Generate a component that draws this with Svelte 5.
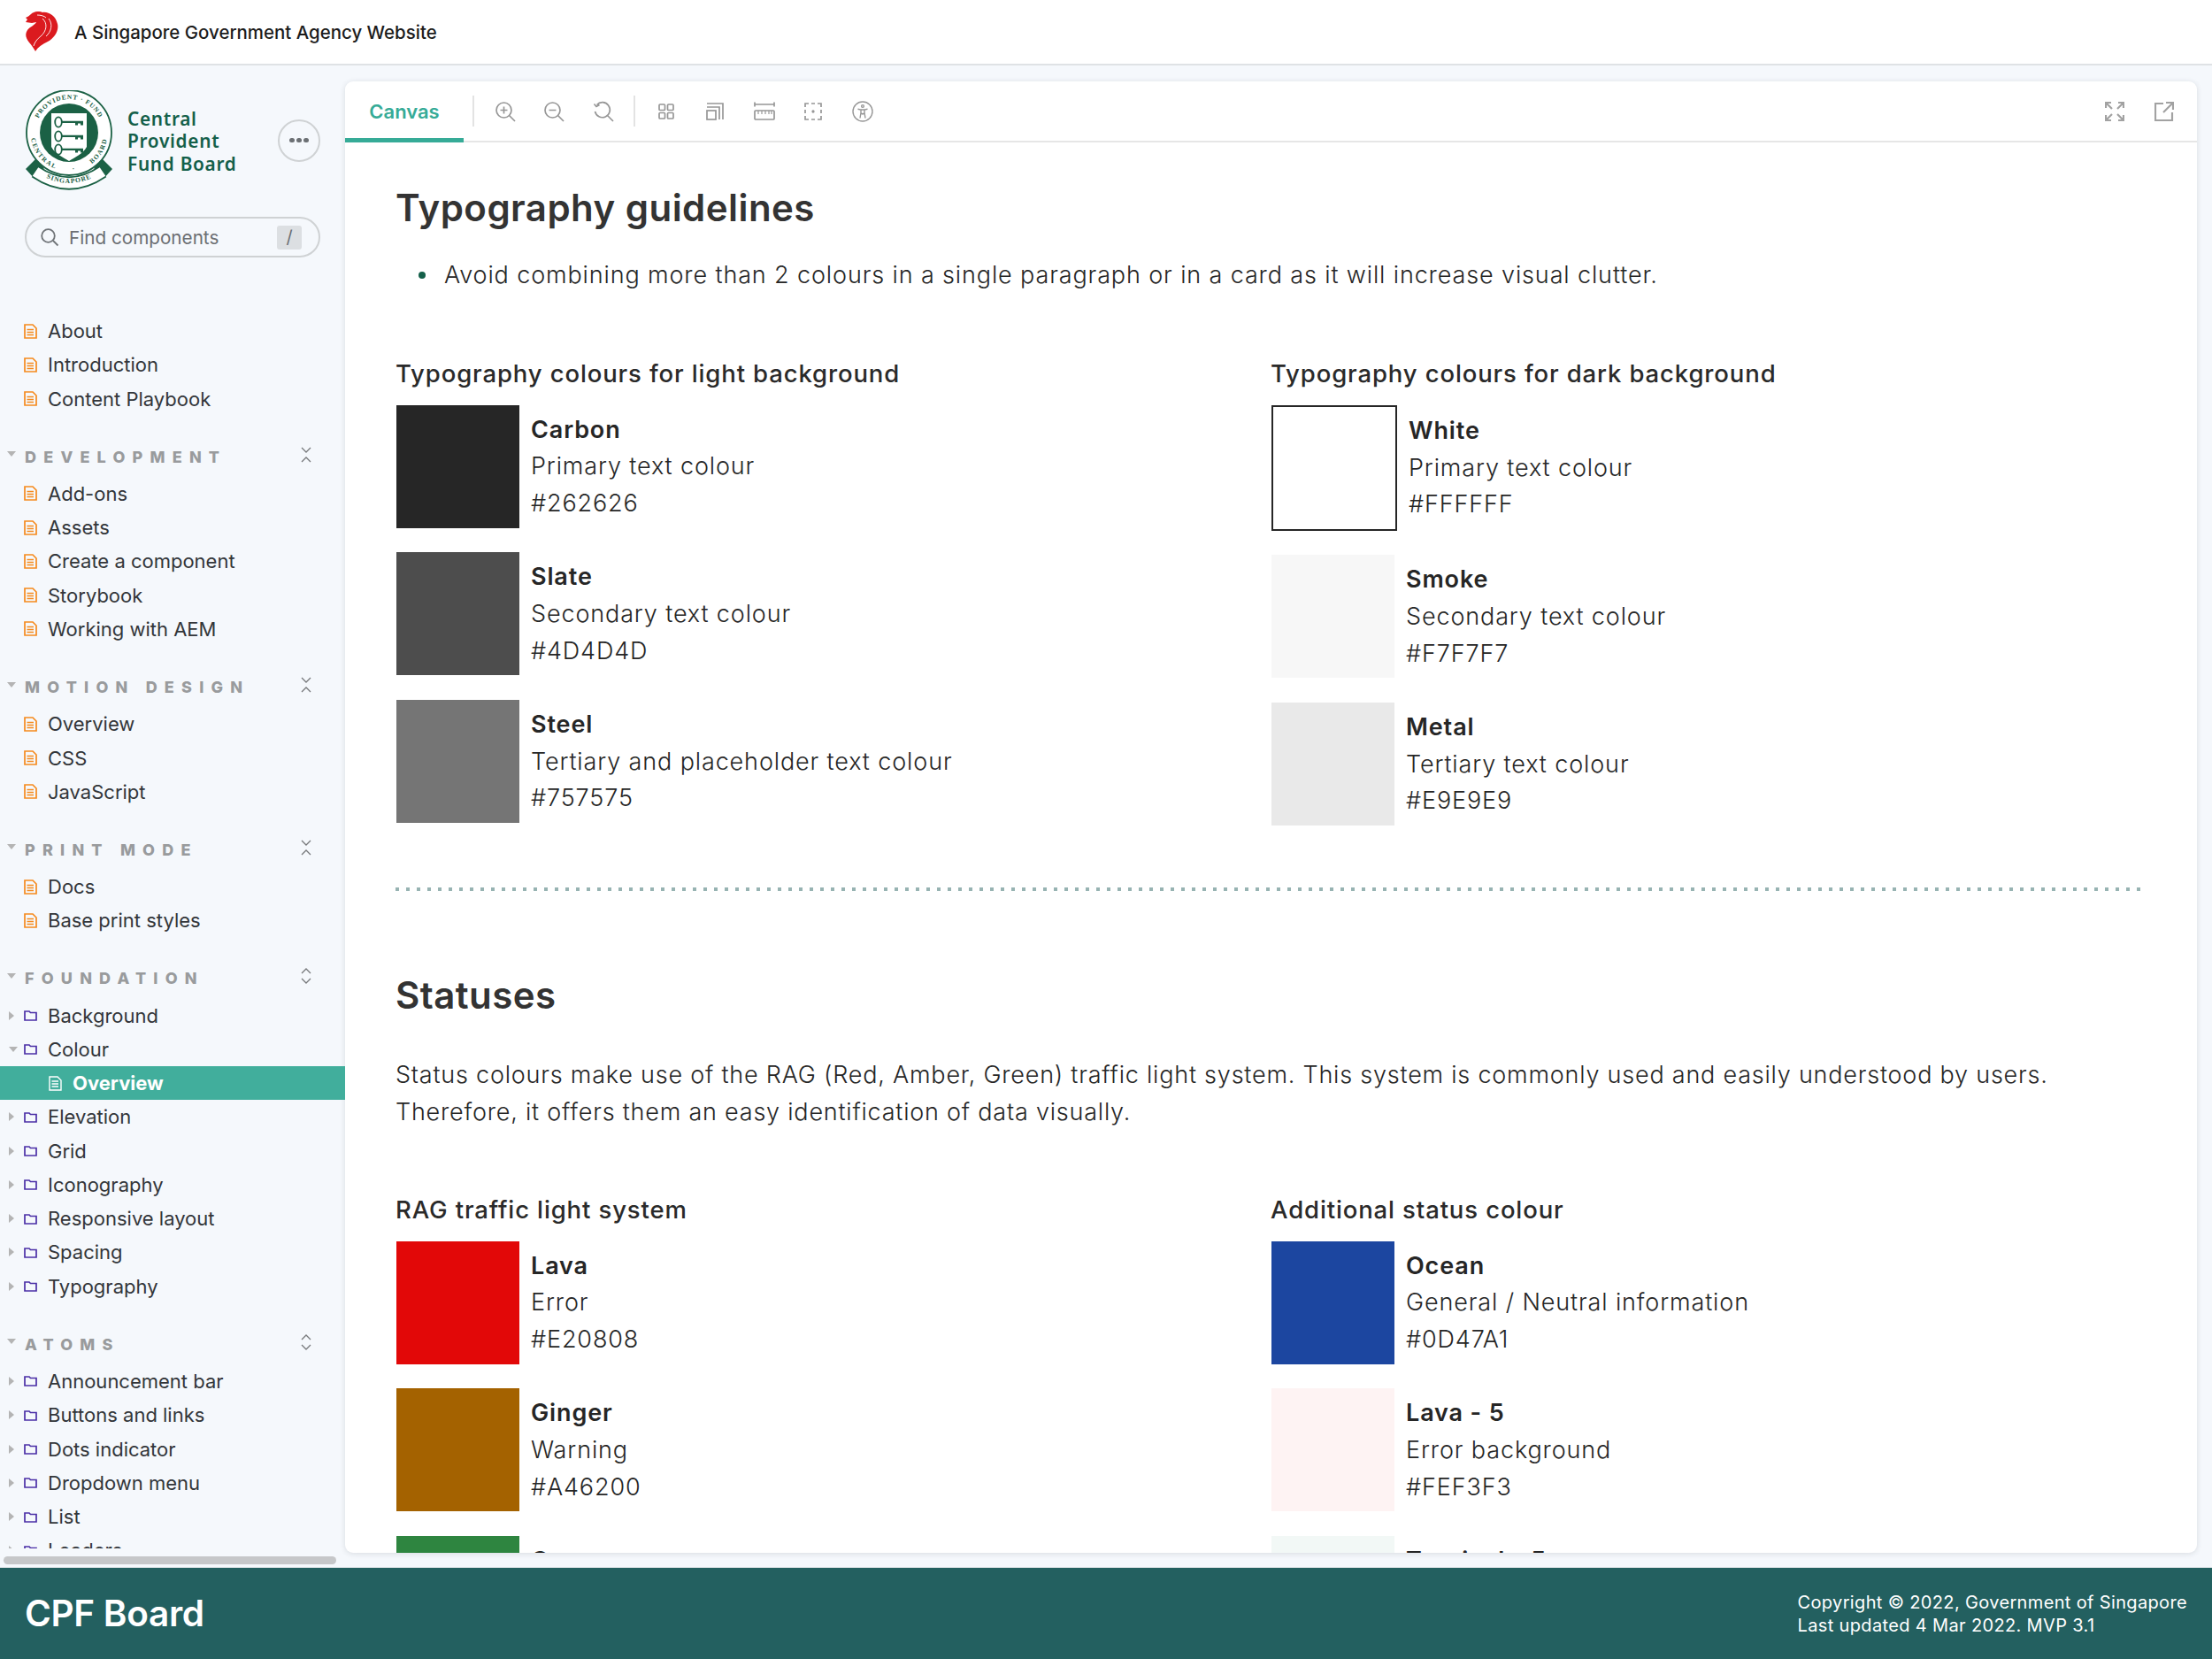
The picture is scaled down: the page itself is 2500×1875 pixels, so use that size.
<script>
  const groups = [
    { items: [['About'], ['Introduction'], ['Content Playbook']].map(a => ({ t: a[0], k: 'doc' })) },
    { label: 'DEVELOPMENT', mode: 'collapse', items: ['Add-ons', 'Assets', 'Create a component', 'Storybook', 'Working with AEM'].map(t => ({ t, k: 'doc' })) },
    { label: 'MOTION DESIGN', mode: 'collapse', items: ['Overview', 'CSS', 'JavaScript'].map(t => ({ t, k: 'doc' })) },
    { label: 'PRINT MODE', mode: 'collapse', items: ['Docs', 'Base print styles'].map(t => ({ t, k: 'doc' })) },
    { label: 'FOUNDATION', mode: 'expand', items: [
      { t: 'Background', k: 'folder' }, { t: 'Colour', k: 'folder', open: true }, { t: 'Overview', k: 'active' },
      { t: 'Elevation', k: 'folder' }, { t: 'Grid', k: 'folder' }, { t: 'Iconography', k: 'folder' },
      { t: 'Responsive layout', k: 'folder' }, { t: 'Spacing', k: 'folder' }, { t: 'Typography', k: 'folder' } ] },
    { label: 'ATOMS', mode: 'expand', items: ['Announcement bar', 'Buttons and links', 'Dots indicator', 'Dropdown menu', 'List', 'Loaders'].map(t => ({ t, k: 'folder' })) }
  ];
  const light = [
    { n: 'Carbon', d: 'Primary text colour', h: '#262626' },
    { n: 'Slate', d: 'Secondary text colour', h: '#4D4D4D' },
    { n: 'Steel', d: 'Tertiary and placeholder text colour', h: '#757575' }
  ];
  const dark = [
    { n: 'White', d: 'Primary text colour', h: '#FFFFFF', outlined: true },
    { n: 'Smoke', d: 'Secondary text colour', h: '#F7F7F7' },
    { n: 'Metal', d: 'Tertiary text colour', h: '#E9E9E9' }
  ];
  const rag = [
    { n: 'Lava', d: 'Error', h: '#E20808' },
    { n: 'Ginger', d: 'Warning', h: '#A46200' },
    { n: 'Green', d: 'Success', h: '#2E8540' }
  ];
  const extra = [
    { n: 'Ocean', d: 'General / Neutral information', h: '#0D47A1', c: '#1c46a0' },
    { n: 'Lava - 5', d: 'Error background', h: '#FEF3F3' },
    { n: 'Tropical - 5', d: 'Success background', h: '#F2F8F6' }
  ];
</script>

{#snippet swatches(list)}
  <div class="swatches">
    {#each list as s}
      <div class="swatch">
        <div class="chip" class:outlined={s.outlined} style="background:{s.c ?? s.h}"></div>
        <div class="info">
          <div class="name">{s.n}</div>
          <div>{s.d}</div>
          <div>{s.h}</div>
        </div>
      </div>
    {/each}
  </div>
{/snippet}

<div class="page">
  <header class="top">
    <svg class="lion" viewBox="0 0 38 45" width="38" height="45">
      <path fill="#db1a1f" d="M1 7C3 6 5 5 7 3C10 0 16-1 20 1C27 0 35 5 37 14C39 22 33 30 26 34C20 37 15 40 12 45C10 42 8 38 5 35C1 30 0 26 3 21C6 17 12 15 13 12L8 13L1 12L3 9Z"/>
      <path fill="none" stroke="#fff" stroke-width="0.9" d="M20 8C26 13 25 22 18 28C14 31 11 35 10 39M27 8C32 14 30 23 24 28M14 4C18 4 22 5 24 7"/>
    </svg>
    <span>A Singapore Government Agency Website</span>
  </header>

  <div class="middle">
    <aside class="side">
      <div class="brand">
        <svg class="crest" viewBox="0 0 100 113" width="100" height="113">
          <defs>
            <path id="ringTop" d="M12 48A38 38 0 0 1 88 48"/>
            <path id="ringBot" d="M6.5 48A43.5 43.5 0 0 0 93.5 48"/>
            <path id="ribbon" d="M12 92Q50 118 88 92"/>
          </defs>
          <circle cx="50" cy="48" r="48" fill="#fff" stroke="#1b6145" stroke-width="1.8"/>
          <circle cx="50" cy="48" r="33" fill="#1b6145"/>
          <text class="ct"><textPath href="#ringTop" startOffset="50%" text-anchor="middle">PROVIDENT · FUND</textPath></text>
          <text class="ct wide"><textPath href="#ringBot" startOffset="50%" text-anchor="middle">CENTRAL · BOARD</textPath></text>
          <path d="M30 26H70V64C66 72 56 76 50 80C44 76 34 72 30 64Z" fill="#fff"/>
          {#each [36, 52, 67] as y}
            <g transform="translate(0,{y - 36})">
              <ellipse cx="38" cy="36" rx="3.8" ry="5.6" fill="none" stroke="#1b6145" stroke-width="1.8"/>
              <path d="M41 34.8H66V39.5H63V37.5H60V39.5H57V37H41Z" fill="#1b6145"/>
            </g>
          {/each}
          <path d="M1 89L12 78L22 88L11 100Z" fill="#1b6145"/>
          <path d="M99 89L88 78L78 88L89 100Z" fill="#1b6145"/>
          <path d="M12 92Q50 118 88 92" fill="none" stroke="#1b6145" stroke-width="15"/>
          <path d="M12 92Q50 118 88 92" fill="none" stroke="#fff" stroke-width="11.5"/>
          <text class="ct rib"><textPath href="#ribbon" startOffset="50%" text-anchor="middle">SINGAPORE</textPath></text>
        </svg>
        <div class="brand-name">Central<br />Provident<br />Fund Board</div>
        <button class="more" aria-label="More"><i></i><i></i><i></i></button>
      </div>

      <div class="search">
        <svg viewBox="0 0 22 22" width="22" height="22" fill="none" stroke="#6f7377" stroke-width="1.8"><circle cx="9.5" cy="9.5" r="7.3"/><path d="M15 15l5.5 5.5"/></svg>
        <span>Find components</span>
        <kbd>/</kbd>
      </div>

      <nav class="nav">
        {#each groups as g}
          <section class="group">
            {#if g.label}
              <div class="label">
                <svg class="tri" viewBox="0 0 10 6" width="10" height="6"><path d="M0 0H10L5 6Z" fill="#b4b4b4"/></svg>
                <span>{g.label}</span>
                <svg class="toggle" viewBox="0 0 12 18" width="12" height="18" fill="none" stroke="#77797c" stroke-width="1.3">
                  {#if g.mode === 'collapse'}<path d="M1 1l5 5 5-5M1 17l5-5 5 5"/>{:else}<path d="M1 6l5-5 5 5M1 12l5 5 5-5"/>{/if}
                </svg>
              </div>
            {/if}
            {#each g.items as it}
              {#if it.k === 'active'}
                <div class="row active">
                  <svg viewBox="0 0 15 17" width="15" height="17" fill="none" stroke="#fff" stroke-width="1.4"><path d="M1 1H10L14 5V16H1ZM3.5 6H11M3.5 9H11M3.5 12H11"/></svg>
                  <span>{it.t}</span>
                </div>
              {:else}
                <div class="row">
                  <span class="twist">
                    {#if it.k === 'folder'}
                      {#if it.open}
                        <svg viewBox="0 0 10 6" width="10" height="6"><path d="M0 0H10L5 6Z" fill="#b4b4b4"/></svg>
                      {:else}
                        <svg viewBox="0 0 6 10" width="6" height="10"><path d="M0 0V10L6 5Z" fill="#b4b4b4"/></svg>
                      {/if}
                    {/if}
                  </span>
                  {#if it.k === 'doc'}
                    <svg viewBox="0 0 15 17" width="15" height="17" fill="none" stroke="#f58a1e" stroke-width="1.7"><path d="M1 1H10L14 5V16H1ZM3.5 6.5H11M3.5 9.5H11M3.5 12.5H11"/></svg>
                  {:else}
                    <svg viewBox="0 0 15 13" width="15" height="13" fill="none" stroke="#4b2fa6" stroke-width="1.7"><path d="M1 2H6L7.5 3.5H14V12H1Z"/></svg>
                  {/if}
                  <span>{it.t}</span>
                </div>
              {/if}
            {/each}
          </section>
        {/each}
      </nav>
      <div class="hscroll"><div class="thumb"></div></div>
    </aside>

    <main class="card">
      <div class="toolbar">
        <div class="tab">Canvas</div>
        <div class="tools" aria-hidden="true">
          <span class="sep"></span>
          <svg viewBox="0 0 24 24" class="ic"><circle cx="10.5" cy="10.5" r="8.5"/><path d="M16.5 16.5L23 23M10.5 6.5v8M6.5 10.5h8"/></svg>
          <svg viewBox="0 0 24 24" class="ic"><circle cx="10.5" cy="10.5" r="8.5"/><path d="M16.5 16.5L23 23M6.5 10.5h8"/></svg>
          <svg viewBox="0 0 24 24" class="ic"><path d="M4.5 4.5A8.5 8.5 0 1 1 2.5 12M1.5 3.5L4 6.5L7.5 4.5M16.5 16.5L23 23"/></svg>
          <span class="sep"></span>
          <svg viewBox="0 0 24 24" class="ic"><rect x="4" y="4" width="6.5" height="6.5" rx="1"/><rect x="13.5" y="4" width="6.5" height="6.5" rx="1"/><rect x="4" y="13.5" width="6.5" height="6.5" rx="1"/><rect x="13.5" y="13.5" width="6.5" height="6.5" rx="1"/></svg>
          <svg viewBox="0 0 24 24" class="ic"><rect x="3" y="11" width="10" height="10"/><path d="M3 7H17V21M3 3H21V21"/></svg>
          <svg viewBox="0 0 24 24" class="ic"><path d="M1 4H23M1 1.5V6.5M23 1.5V6.5"/><rect x="1" y="11" width="22" height="10" rx="1"/><path d="M5 11V15M9 11V15M13 11V15M17 11V15M20 11V15" stroke-width="1.2"/></svg>
          <svg viewBox="0 0 24 24" class="ic"><path d="M3 7V3H7M10 3H14M17 3H21V7M21 10V14M21 17V21H17M14 21H10M7 21H3V17M3 14V10"/><circle cx="12" cy="12" r="0.8"/></svg>
          <svg viewBox="0 0 24 24" class="ic thin"><circle cx="12" cy="12" r="11"/><circle cx="12" cy="6" r="1.4"/><path d="M6.5 9.2L10 10V13.5L9 19.5M17.5 9.2L14 10V13.5L15 19.5M10 10H14M10 14L12 15L14 14"/></svg>
        </div>
        <div class="tools right" aria-hidden="true">
          <svg viewBox="0 0 22 22" class="ic2"><path d="M1 7V1H7M1 1L8 8M15 1H21V7M21 1L14 8M1 15V21H7M1 21L8 14M21 15V21H15M21 21L14 14"/></svg>
          <svg viewBox="0 0 22 22" class="ic2"><path d="M10 2H1V21H20V12M13 1H21V9M21 1L10 12"/></svg>
        </div>
      </div>

      <div class="content">
        <h1>Typography guidelines</h1>
        <ul><li>Avoid combining more than 2 colours in a single paragraph or in a card as it will increase visual clutter.</li></ul>

        <div class="cols">
          <div>
            <h3>Typography colours for light background</h3>
            {@render swatches(light)}
          </div>
          <div>
            <h3>Typography colours for dark background</h3>
            {@render swatches(dark)}
          </div>
        </div>

        <hr />

        <h2>Statuses</h2>
        <p>Status colours make use of the RAG (Red, Amber, Green) traffic light system. This system is commonly used and easily understood by users. Therefore, it offers them an easy identification of data visually.</p>

        <div class="cols second">
          <div>
            <h3>RAG traffic light system</h3>
            {@render swatches(rag)}
          </div>
          <div>
            <h3>Additional status colour</h3>
            {@render swatches(extra)}
          </div>
        </div>
      </div>
    </main>
  </div>

  <footer class="foot">
    <div class="foot-name">CPF Board</div>
    <div class="foot-copy">Copyright © 2022, Government of Singapore<br />Last updated 4 Mar 2022. MVP 3.1</div>
  </footer>
</div>

<style>
  :global(body) { margin: 0; background: #f5f8fc; }
  .page {
    width: 2500px; height: 1875px; display: grid; grid-template-rows: 74px 1fr 104px;
    font-family: Inter, "Liberation Sans", sans-serif; color: #262626; overflow: hidden;
  }
  .top {
    display: flex; align-items: center; gap: 18px; padding-left: 28px; background: #fff;
    border-bottom: 2px solid #dfe2e5; box-sizing: border-box; font-size: 20.45px; font-weight: 500; color: #1c1c1c;
  }
  .lion { margin-top: -2px; flex: none; }
  .middle { display: flex; min-height: 0; }
  .side { width: 390px; flex: none; display: flex; flex-direction: column; position: relative; box-sizing: border-box; }
  .brand { display: flex; align-items: center; padding: 28px 28px 0; height: 113px; box-sizing: content-box; }
  .crest { flex: none; }
  .ct { font: 700 7.4px "Liberation Serif", serif; fill: #1b6145; letter-spacing: .9px; }
  .ct.wide { word-spacing: 16px; letter-spacing: 1.5px; }
  .rib { font-size: 7.6px; }
  .brand-name {
    margin: 3px 0 0 16px; font: 600 20.8px/25.5px "Noto Sans", sans-serif; letter-spacing: .7px; color: #14604a; white-space: nowrap;
  }
  .more {
    margin-left: auto; width: 48px; height: 48px; border-radius: 50%; border: 2px solid #cfd2d4; background: transparent;
    display: flex; align-items: center; justify-content: center; gap: 2.5px; padding: 0;
  }
  .more i { width: 5.5px; height: 5.5px; border-radius: 50%; background: #6c7074; }
  .search {
    margin: 30px 28px 0; height: 46px; border: 2px solid #cfd2d4; border-radius: 24px; box-sizing: border-box;
    display: flex; align-items: center; padding: 0 19px 0 15px; color: #6c6f73; font-size: 20.7px; gap: 11px;
  }
  .search kbd {
    margin-left: auto; width: 28px; height: 27px; background: #dcdfe2; border-radius: 3px; display: flex;
    align-items: center; justify-content: center; font: 400 20px Inter, sans-serif; color: #6c6f73;
  }
  .nav { margin-top: 64px; flex: 1; min-height: 0; overflow: hidden; margin-bottom: 21px; }
  .group + .group { margin-top: 24px; }
  .label {
    height: 45px; display: flex; align-items: center; padding-left: 8px; position: relative;
    font-size: 18px; font-weight: 800; letter-spacing: 8.2px; color: #999b9d; white-space: nowrap;
  }
  .label .tri { margin-right: 10px; margin-top: -6px; }
  .toggle { position: absolute; left: 340px; top: 11px; }
  .row {
    height: 38.28px; display: flex; align-items: center; padding-left: 8px; font-size: 22px; color: #33363a; white-space: nowrap;
  }
  .twist { width: 19px; display: flex; align-items: center; flex: none; }
  .twist svg { margin-left: 2px; }
  .row svg + span { margin-left: 12px; }
  .row > svg { flex: none; }
  .row.active { background: #41ae9c; color: #fff; font-weight: 700; padding-left: 55px; }
  .hscroll { position: absolute; left: 4px; right: 10px; bottom: 3px; height: 9px; }
  .thumb { height: 100%; border-radius: 5px; background: #c6c7c9; }
  .card {
    flex: 1; margin: 18px 17px 16px 0; background: #fff; border-radius: 9px; overflow: hidden; min-width: 0;
    box-shadow: 0 1px 6px rgba(40, 50, 60, .14); display: flex; flex-direction: column;
  }
  .toolbar {
    height: 69px; flex: none; box-sizing: border-box; border-bottom: 2px solid #e6e6e6; display: flex; align-items: center; position: relative;
  }
  .tab {
    width: 134px; align-self: stretch; margin-bottom: -2px; box-sizing: border-box; border-bottom: 5px solid #36ab97;
    color: #36ab97; font-size: 22px; font-weight: 600; display: flex; align-items: center; justify-content: center; padding: 4px 0 0;
  }
  .tools { display: flex; align-items: center; gap: 31.5px; margin-left: 19px; }
  .tools .sep { width: 2px; height: 35px; background: #e3e3e3; margin: 0 -9px; }
  .ic { width: 24px; height: 24px; fill: none; stroke: #979797; stroke-width: 1.7; flex: none; }
  .ic.thin { stroke-width: 1.4; }
  .tools.right { margin-left: auto; margin-right: 26px; gap: 34px; }
  .ic2 { width: 22px; height: 22px; fill: none; stroke: #a2a2a2; stroke-width: 2.2; flex: none; }
  .content { padding: 0 60px 0 58px; flex: 1; min-height: 0; overflow: hidden; font-weight: 300; font-size: 27px; line-height: 41.6px; letter-spacing: .87px; }
  h1, h2 { margin: 0; font-size: 42px; line-height: 50px; font-weight: 600; color: #333; letter-spacing: .45px; margin-left: -1px; }
  h1 { margin-top: 49px; }
  ul { margin: 30px 0 0; padding: 0 0 0 25px; list-style: none; }
  li { display: flex; align-items: center; gap: 21px; }
  li::before { content: ""; width: 8px; height: 8px; border-radius: 50%; background: #14604a; flex: none; }
  .cols { display: grid; grid-template-columns: 989px 1fr; margin-top: 70px; }
  .cols.second { margin-top: 69.5px; }
  h3 { margin: 0 0 16px -1px; font-size: 27.5px; line-height: 40px; font-weight: 500; color: #2a2a2a; letter-spacing: .87px; }
  .swatches { display: flex; flex-direction: column; gap: 27.7px; }
  .swatch { display: flex; align-items: center; gap: 13px; color: #262626; white-space: nowrap; }
  .chip { width: 139px; height: 139px; flex: none; }
  .chip.outlined { width: 142px; height: 142px; box-sizing: border-box; border: 2px solid #262626; }
  .name { font-weight: 600; }
  hr {
    margin: 70px 0 0 -1px; border: 0; height: 4px;
    background: repeating-linear-gradient(90deg, #97b3b2 0 4px, transparent 4px 12px);
  }
  h2 { margin-top: 93px; }
  p { margin: 44px 0 0 -1px; letter-spacing: .78px; }
  .foot {
    background: #236060; color: #fff; display: flex; align-items: center; justify-content: space-between; padding: 0 28px; border-top: 1px solid #dfe5e8;
    box-sizing: border-box;
  }
  .foot-name { font-size: 40.5px; font-weight: 600; letter-spacing: -.3px; }
  .foot-copy { font-size: 20px; line-height: 26px; font-weight: 400; letter-spacing: .35px; }
</style>
